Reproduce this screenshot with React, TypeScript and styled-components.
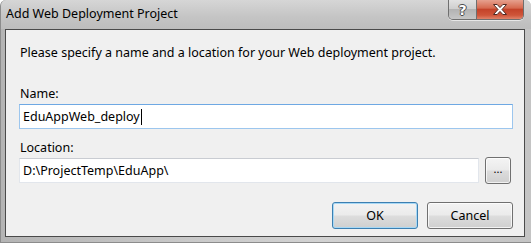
import React from 'react';
import styled, { createGlobalStyle } from 'styled-components';

const GlobalStyle = createGlobalStyle`
  html, body {
    margin: 0;
    padding: 0;
    background: #ffffff;
  }
  body {
    font-family: "Noto Sans", "Open Sans", "DejaVu Sans", sans-serif;
    font-size: 12.5px;
    color: #000000;
  }
`;

const App: React.FC = () => {
  return (
    <>
      <GlobalStyle />
      <Window>
        <TitleBar>
          <Title>Add Web Deployment Project</Title>
          <CaptionButtons>
            <HelpButton>?</HelpButton>
            <CloseButton>
              <svg width="18" height="13" viewBox="0 0 18 13">
                <path
                  d="M2.5 1.5 L6.2 1.5 L9 4.6 L11.8 1.5 L15.5 1.5 L11 6.5 L15.5 11.5 L11.8 11.5 L9 8.4 L6.2 11.5 L2.5 11.5 L7 6.5 Z"
                  fill="#ffffff"
                  stroke="#4e2a24"
                  strokeWidth="1"
                  strokeLinejoin="round"
                />
              </svg>
            </CloseButton>
          </CaptionButtons>
        </TitleBar>

        <Client>
          <Prompt>Please specify a name and a location for your Web deployment project.</Prompt>

          <Label $gap={26}>Name:</Label>
          <FieldRow>
            <TextBox $focused>
              EduAppWeb_deploy
              <Caret />
            </TextBox>
          </FieldRow>

          <Label $gap={11}>Location:</Label>
          <FieldRow $withButton>
            <TextBox>D:\ProjectTemp\EduApp\</TextBox>
            <BrowseButton>...</BrowseButton>
          </FieldRow>

          <ButtonRow>
            <PushButton $default>OK</PushButton>
            <PushButton>Cancel</PushButton>
          </ButtonRow>
        </Client>
      </Window>
    </>
  );
};

const Window = styled.div`
  width: 531px;
  height: 243px;
  box-sizing: border-box;
  display: flex;
  flex-direction: column;
  background: linear-gradient(90deg, #b4b4b4 0%, #c9c9c9 35%, #d2d2d2 60%, #c4c4c4 100%);
  border-left: 1px solid #8c8c8c;
  border-bottom: 1px solid #8c8c8c;
  border-radius: 6px 6px 0 0;
  overflow: hidden;
`;

const TitleBar = styled.div`
  height: 29px;
  flex: none;
  display: flex;
  justify-content: space-between;
  align-items: flex-start;
  background: linear-gradient(180deg, #d6d6d6 0%, #c4c4c4 60%, #bdbdbd 100%);
`;

const Title = styled.div`
  padding: 6px 0 0 5px;
  font-size: 12.5px;
  line-height: 15px;
  color: #000000;
`;

const CaptionButtons = styled.div`
  display: flex;
  margin-right: 7px;
  height: 19px;
  border: 1px solid #6f6f6f;
  border-top: none;
  border-radius: 0 0 5px 5px;
  overflow: hidden;
  box-shadow: 0 1px 0 rgba(255, 255, 255, 0.6);
`;

const HelpButton = styled.div`
  width: 27px;
  height: 19px;
  display: flex;
  align-items: center;
  justify-content: center;
  background: linear-gradient(180deg, #e2e2e2 0%, #cfcfcf 45%, #b3b3b3 50%, #c6c6c6 100%);
  border-right: 1px solid #6f6f6f;
  font-family: "DejaVu Sans", sans-serif;
  font-weight: bold;
  font-size: 14px;
  color: #ffffff;
  text-shadow: -1px 0 #4a4a4a, 1px 0 #4a4a4a, 0 -1px #4a4a4a, 0 1px #4a4a4a;
`;

const CloseButton = styled.div`
  width: 46px;
  height: 19px;
  display: flex;
  align-items: center;
  justify-content: center;
  background: linear-gradient(180deg, #e6a08e 0%, #d66a50 42%, #c4432a 50%, #cf5539 80%, #e0836a 100%);
`;

const Client = styled.div`
  flex: 1;
  margin: 0 6px 5px 4px;
  box-sizing: border-box;
  border: 1px solid #4a4a4a;
  background: #f0f0f0;
  padding: 15px 11px 0 13px;
  display: flex;
  flex-direction: column;
`;

const Prompt = styled.div`
  line-height: 15px;
  padding-left: 1px;
  color: #000000;
`;

const Label = styled.div<{ $gap: number }>`
  margin-top: ${({ $gap }) => $gap}px;
  margin-bottom: 3px;
  line-height: 15px;
  padding-left: 1px;
`;

const FieldRow = styled.div<{ $withButton?: boolean }>`
  display: flex;
  align-items: center;
  gap: 6px;
  padding-right: ${({ $withButton }) => ($withButton ? 2 : 0)}px;
  margin-top: ${({ $withButton }) => ($withButton ? -1 : 0)}px;
`;

const TextBox = styled.div<{ $focused?: boolean }>`
  flex: 1;
  height: 25px;
  box-sizing: border-box;
  display: flex;
  align-items: center;
  padding-left: 3px;
  background: #ffffff;
  border: 1px solid ${({ $focused }) => ($focused ? '#9cc6ee' : '#e2e6ec')};
  border-top-color: ${({ $focused }) => ($focused ? '#6ea8e3' : '#c9ccd2')};
  line-height: 15px;
  white-space: pre;
`;

const Caret = styled.span`
  display: inline-block;
  width: 1px;
  height: 16px;
  margin-left: 1px;
  background: #000000;
`;

const BrowseButton = styled.div`
  width: 26px;
  height: 27px;
  box-sizing: border-box;
  display: flex;
  align-items: center;
  justify-content: center;
  padding-bottom: 4px;
  border: 1px solid #707070;
  border-radius: 3px;
  background: linear-gradient(180deg, #f4f4f4 0%, #eaeaea 48%, #dcdcdc 52%, #cfcfcf 100%);
  box-shadow: inset 0 0 0 1px rgba(255, 255, 255, 0.7);
  font-size: 11px;
  line-height: 11px;
`;

const ButtonRow = styled.div`
  display: flex;
  justify-content: flex-end;
  gap: 9px;
  margin-top: 18px;
`;

const PushButton = styled.div<{ $default?: boolean }>`
  width: 86px;
  height: 27px;
  box-sizing: border-box;
  display: flex;
  align-items: center;
  justify-content: center;
  border: 1px solid ${({ $default }) => ($default ? '#3c7fb1' : '#707070')};
  border-radius: 3px;
  background: linear-gradient(180deg, #f3f3f3 0%, #ebebeb 48%, #dddddd 52%, #cfcfcf 100%);
  box-shadow: inset 0 0 0 1px ${({ $default }) => ($default ? '#a7d8f5' : 'rgba(255, 255, 255, 0.75)')};
  line-height: 15px;
`;

export default App;
